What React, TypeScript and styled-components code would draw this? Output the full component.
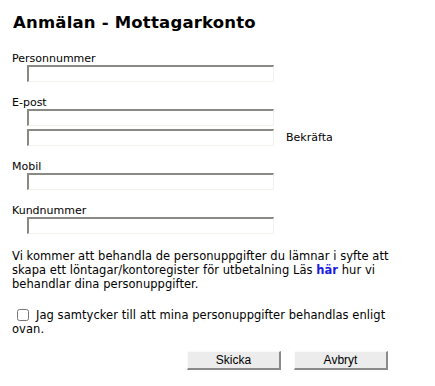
import React from "react";
import styled, { createGlobalStyle } from "styled-components";

const Global = createGlobalStyle`
  html, body { margin: 0; padding: 0; background: #fff; }
  body { font-family: "DejaVu Sans", Verdana, sans-serif; color: #000; }
`;

const Page = styled.div`
  padding: 12px 12px 0 12px;
  width: 411px;
`;

const Title = styled.h1`
  margin: 0 0 0 1px;
  font-size: 16.5px;
  font-weight: bold;
  line-height: 22px;
  letter-spacing: 0.2px;
`;

const Form = styled.form`
  margin-top: 18px;
  display: flex;
  flex-direction: column;
`;

const Field = styled.div`
  display: flex;
  flex-direction: column;
  margin-bottom: 14px;
`;

const Label = styled.label`
  font-size: 11px;
  line-height: 13px;
`;

const Row = styled.div<{ $gap?: number }>`
  display: flex;
  align-items: center;
  margin-left: 15px;
  margin-top: ${(p) => p.$gap ?? 0}px;
`;

const Input = styled.input`
  box-sizing: border-box;
  width: 247px;
  height: 17px;
  margin: 0;
  padding: 0 2px;
  border-style: solid;
  border-width: 2px 1px 1px 2px;
  border-color: #8a8a84 #f2f2ea #f2f2ea #8a8a84;
  background: #fff;
  font: inherit;
  font-size: 11px;
  outline: none;
`;

const Side = styled.span`
  font-size: 11px;
  margin-left: 12px;
`;

const Text = styled.p`
  margin: 1px 0 0 0;
  width: 378px;
  font-size: 11.5px;
  line-height: 14px;
  letter-spacing: 0.05px;
`;

const Link = styled.a`
  color: #1a1ae0;
  font-weight: bold;
  text-decoration: none;
`;

const Consent = styled.label`
  display: block;
  width: 378px;
  margin-top: 17px;
  font-size: 11.5px;
  line-height: 14px;
  letter-spacing: 0.05px;
`;

const Check = styled.input`
  width: 12px;
  height: 12px;
  margin: 0 7px 0 5px;
  vertical-align: -2px;
`;

const Buttons = styled.div`
  display: flex;
  gap: 13px;
  margin-top: 15px;
  padding-left: 175px;
`;

const Button = styled.button`
  box-sizing: border-box;
  width: 94px;
  height: 19px;
  padding: 0;
  font-family: "Liberation Sans", Arial, sans-serif;
  font-size: 12px;
  color: #000;
  background: #ececec;
  border-style: solid;
  border-width: 1px 2px 2px 1px;
  border-color: #fafafa #8a8a8a #8a8a8a #fafafa;
`;

export default function App() {
  return (
    <Page>
      <Global />
      <Title>Anmälan - Mottagarkonto</Title>
      <Form onSubmit={(e) => e.preventDefault()}>
        <Field>
          <Label>Personnummer</Label>
          <Row>
            <Input />
          </Row>
        </Field>
        <Field>
          <Label>E-post</Label>
          <Row>
            <Input />
          </Row>
          <Row $gap={3}>
            <Input />
            <Side>Bekräfta</Side>
          </Row>
        </Field>
        <Field>
          <Label>Mobil</Label>
          <Row>
            <Input />
          </Row>
        </Field>
        <Field>
          <Label>Kundnummer</Label>
          <Row>
            <Input />
          </Row>
        </Field>
        <Text>
          Vi kommer att behandla de personuppgifter du lämnar i syfte att skapa ett
          löntagar/kontoregister för utbetalning Läs <Link href="#">här</Link> hur vi
          behandlar dina personuppgifter.
        </Text>
        <Consent>
          <Check type="checkbox" />
          Jag samtycker till att mina personuppgifter behandlas enligt ovan.
        </Consent>
        <Buttons>
          <Button type="submit">Skicka</Button>
          <Button type="button">Avbryt</Button>
        </Buttons>
      </Form>
    </Page>
  );
}
